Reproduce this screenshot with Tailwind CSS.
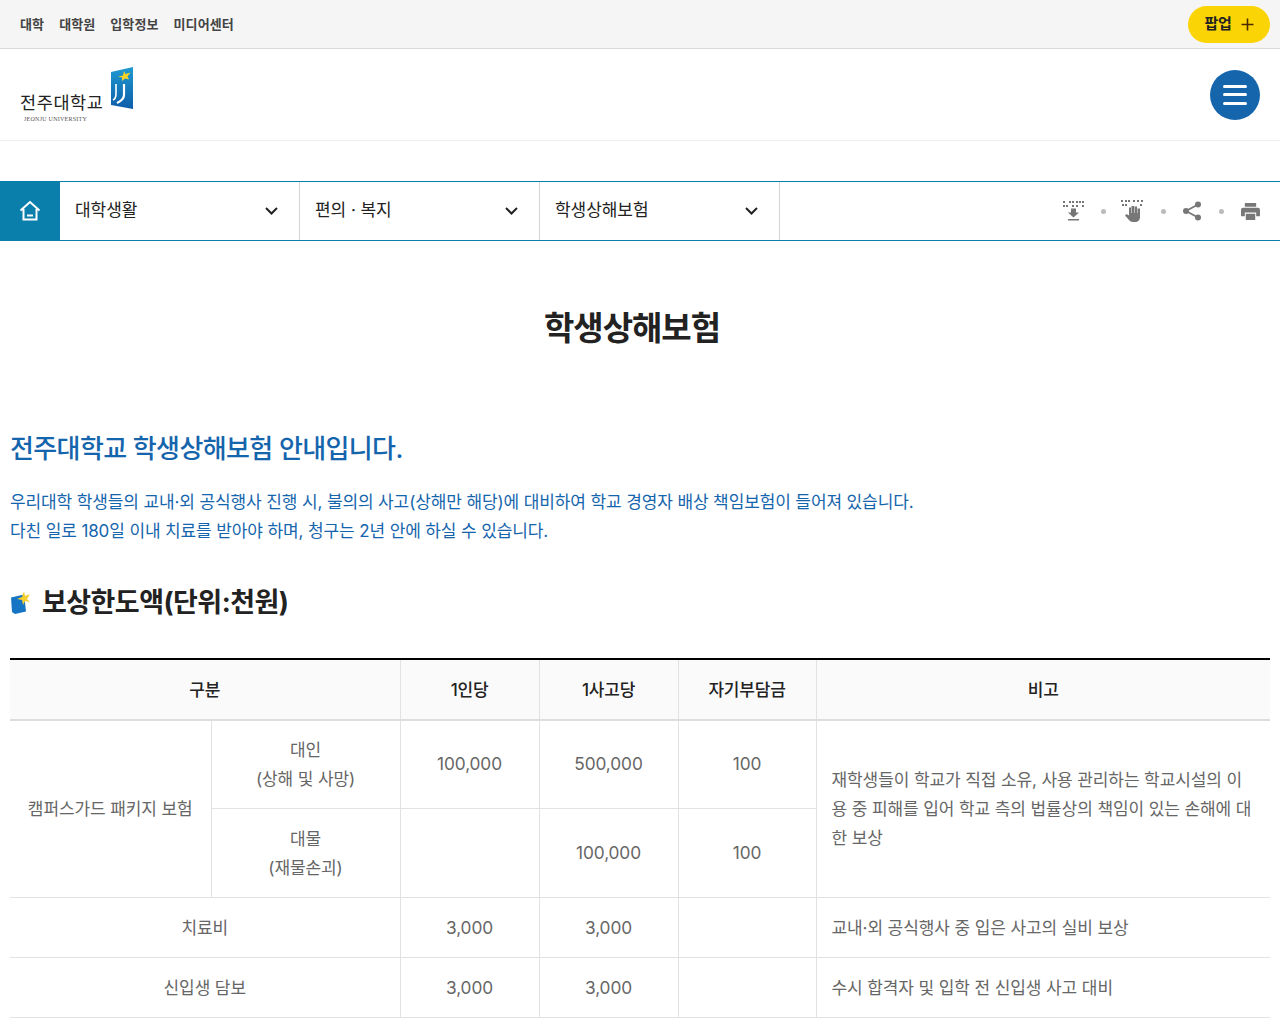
<!DOCTYPE html>
<html lang="ko">
<head>
  <meta charset="UTF-8">
  <title>학생상해보험</title>
  <script src="https://cdn.jsdelivr.net/npm/@tailwindcss/browser@4"></script>
</head>
<body class="bg-white font-['Inter','Noto_Sans_CJK_KR',sans-serif] text-[#222] overflow-hidden h-[1024px]">
  <!-- top bar -->
  <div class="h-[49px] bg-[#f5f5f5] border-b border-[#d9d9d9] flex items-center justify-between pl-5 pr-2.5">
    <ul class="flex gap-[15px] pt-0.5 text-[13px] font-bold text-[#444] tracking-[0.1px]">
      <li>대학</li>
      <li>대학원</li>
      <li>입학정보</li>
      <li>미디어센터</li>
    </ul>
    <button class="w-[82px] h-[37px] rounded-full bg-[#fbd406] flex items-center justify-center gap-[9px] text-[15px] font-bold text-[#222] tracking-[-0.3px]">
      팝업
      <svg width="13" height="13" viewBox="0 0 13 13"><path d="M6.500 0.500v12M0.500 6.500h12" stroke="#4a2a00" stroke-width="1.600"/></svg>
    </button>
  </div>

  <!-- logo row -->
  <div class="h-[92px] border-b border-[#eee] flex items-center justify-between pl-5 pr-5">
    <div class="relative w-[120px] h-[60px] mt-1">
      <div class="absolute left-0 top-[23px] text-[17.500px] leading-[26px] text-[#222] font-normal tracking-[0.6px] whitespace-nowrap">전주대학교</div>
      <div class="absolute left-1 top-[48px] text-[6px] leading-[8px] text-[#555] font-['Liberation_Serif'] tracking-[0.25px] whitespace-nowrap">JEONJU UNIVERSITY</div>
      <svg class="absolute left-[90px] top-0" width="24" height="44" viewBox="0 0 24 44">
        <defs><linearGradient id="lg" x1="0" y1="0" x2="0" y2="1"><stop offset="0" stop-color="#1f9ad1"/><stop offset="1" stop-color="#0d5da8"/></linearGradient></defs>
        <path d="M1 5L23 0V42L1 38Z" fill="url(#lg)"/>
        <path d="M14 4l1.500 3 5-1.500-3 4 1.500 3-4-1-3 2.500 0-3.500-4-1 5-1z" fill="#f5d327"/>
        <path d="M6 17v10c0 3-1 5-3 6" stroke="#fff" stroke-width="1.600" fill="none"/>
        <path d="M14 17v11c0 4-3 6-7 8" stroke="#fff" stroke-width="2.200" fill="none"/>
      </svg>
    </div>
    <button class="w-[50px] h-[50px] rounded-full bg-[#1565ad] flex flex-col items-center justify-center gap-[5.5px]">
      <span class="block w-6 h-[3px] rounded bg-white"></span>
      <span class="block w-6 h-[3px] rounded bg-white"></span>
      <span class="block w-6 h-[3px] rounded bg-white"></span>
    </button>
  </div>

  <!-- location bar -->
  <div class="mt-10 h-[60px] border-y border-[#0b7fab] flex items-stretch">
    <a class="w-[60px] -my-px bg-[#0b7fab] flex items-center justify-center">
      <svg width="22" height="22" viewBox="0 0 22 22" fill="none" stroke="#fff" stroke-width="2"><path d="M1.500 10.500L11 2l9.500 8.500M4.500 9v10.500h13V9"/><path d="M8 15.500h6"/></svg>
    </a>
    <div class="w-60 border-r border-[#d5d5d5] flex items-center justify-between pl-[15px] pr-[21px] text-[17px] tracking-[-0.05px]">
      <span>대학생활</span>
      <svg width="13" height="8" viewBox="0 0 13 8" fill="none" stroke="#222" stroke-width="2"><path d="M1 1l5.500 5.500L12 1"/></svg>
    </div>
    <div class="w-60 border-r border-[#d5d5d5] flex items-center justify-between pl-[15px] pr-[21px] text-[17px] tracking-[-0.05px]">
      <span>편의 · 복지</span>
      <svg width="13" height="8" viewBox="0 0 13 8" fill="none" stroke="#222" stroke-width="2"><path d="M1 1l5.500 5.500L12 1"/></svg>
    </div>
    <div class="w-60 border-r border-[#d5d5d5] flex items-center justify-between pl-[15px] pr-[21px] text-[17px] tracking-[-0.05px]">
      <span>학생상해보험</span>
      <svg width="13" height="8" viewBox="0 0 13 8" fill="none" stroke="#222" stroke-width="2"><path d="M1 1l5.500 5.500L12 1"/></svg>
    </div>
    <div class="flex-1 flex items-center justify-end pr-5 gap-[17.5px]">
      <svg class="-mr-0.5" width="23" height="20" viewBox="0 0 23 20" fill="#777">
        <path d="M1 0h2v2H1zM7 0h2v2H7zM10 0h2v2h-2zM14 0h2v2h-2zM17 0h2v2h-2zM20 0h2v2h-2zM1 4h2v2H1zM4 4h2v2H4zM10 4h2v2h-2zM14 4h2v2h-2zM20 4h2v2h-2z"/>
        <path d="M9 7.500h5v4h3l-5.500 5-5.500-5h3zM6 18h11v1.500H6z"/>
      </svg>
      <span class="-mr-0.5 w-[5px] h-[5px] rounded-full bg-[#bbb]"></span>
      <svg width="22" height="22" viewBox="0 0 22 22" fill="#777">
        <path d="M0 0h2v2H0zM4 0h2v2H4zM7 0h2v2H7zM12 0h2v2h-2zM16 0h2v2h-2zM20 0h2v2h-2zM1 4h2v2H1zM4 4h2v2H4zM19 4h2v2h-2z"/>
        <path d="M8 7.500h2V13h.500V6h2.500v7h.500V6.500h2.500V13h.500V8.500h2.500V17c0 3-2 5-5 5h-2c-2 0-3-1-4-2l-4-4.500 1.500-1.500L8 15.500z"/>
      </svg>
      <span class="w-[5px] h-[5px] rounded-full bg-[#bbb]"></span>
      <svg width="18" height="20" viewBox="0 0 18 20" fill="#777">
        <circle cx="15" cy="3.500" r="3"/><circle cx="3" cy="10" r="3"/><circle cx="15" cy="16.500" r="3"/>
        <path d="M3 10L15 3.500M3 10l12 6.500" stroke="#777" stroke-width="1.800"/>
      </svg>
      <span class="w-[5px] h-[5px] rounded-full bg-[#bbb]"></span>
      <svg width="19" height="17" viewBox="0 0 20 18" fill="#777">
        <path d="M4 0h12v4H4zM2 5h16a2 2 0 0 1 2 2v7h-4v-4H4v4H0V7a2 2 0 0 1 2-2zM5 11.500h10V18H5z"/>
      </svg>
    </div>
  </div>

  <!-- content -->
  <div class="px-2.5">
    <h1 class="mt-[63px] mr-4 text-center text-[33px] leading-[48px] font-bold text-[#222] tracking-[-1px]">학생상해보험</h1>

    <h2 class="mt-[78px] text-[26px] leading-[38px] font-medium text-[#1565ad] tracking-[-0.62px]">전주대학교 학생상해보험 안내입니다.</h2>
    <p class="mt-[20px] text-[17px] leading-[29px] text-[#1565ad] tracking-[-0.12px]">
      우리대학 학생들의 교내·외 공식행사 진행 시, 불의의 사고(상해만 해당)에 대비하여 학교 경영자 배상 책임보험이 들어져 있습니다.<br>
      다친 일로 180일 이내 치료를 받아야 하며, 청구는 2년 안에 하실 수 있습니다.
    </p>

    <h3 class="mt-[37px] flex items-center gap-[11px] text-[27px] leading-[40px] font-bold text-[#222] tracking-[-0.55px]">
      <svg width="21" height="24" viewBox="0 0 21 24">
        <path d="M1 6.500L14 3.500 16 20.500 5 23 2 21Z" fill="#1574c4"/>
        <path d="M14 0l1 5 5-2-3 5 3 3-5-1-2 4-1-5-5-1 5-2z" fill="#f6cf2e"/>
      </svg>
      보상한도액(단위:천원)
    </h3>

    <table class="mt-[35px] w-[1260px] table-fixed border-collapse border-t-2 border-black text-[17px] text-[#666] tracking-[-0.1px] text-center">
      <colgroup>
        <col class="w-[201px]"><col class="w-[189px]"><col class="w-[139px]"><col class="w-[139px]"><col class="w-[138px]"><col>
      </colgroup>
      <thead>
        <tr class="h-[61px] bg-[#fafafa] border-b-2 border-[#ddd] text-[#222] tracking-[-0.2px]">
          <th colspan="2" class="pt-0.5 font-medium border-r border-[#e2e2e2]">구분</th>
          <th class="pt-0.5 font-medium border-r border-[#e2e2e2]">1인당</th>
          <th class="pt-0.5 font-medium border-r border-[#e2e2e2]">1사고당</th>
          <th class="pt-0.5 font-medium border-r border-[#e2e2e2]">자기부담금</th>
          <th class="pt-0.5 font-medium">비고</th>
        </tr>
      </thead>
      <tbody>
        <tr class="h-[88px] border-b border-[#e2e2e2]">
          <td rowspan="2" class="pt-0.5 border-r border-[#e2e2e2]">캠퍼스가드 패키지 보험</td>
          <td class="pt-0.5 border-r border-[#e2e2e2] leading-[29px]">대인<br>(상해 및 사망)</td>
          <td class="border-r border-[#e2e2e2] text-[17.300px]">100,000</td>
          <td class="border-r border-[#e2e2e2] text-[17.300px]">500,000</td>
          <td class="border-r border-[#e2e2e2] text-[17.300px]">100</td>
          <td rowspan="2" class="pt-0.5 px-[15px] text-left leading-[29px] break-all">재학생들이 학교가 직접 소유, 사용 관리하는 학교시설의 이용 중 피해를 입어 학교 측의 법률상의 책임이 있는 손해에 대한 보상</td>
        </tr>
        <tr class="h-[89px] border-b border-[#e2e2e2]">
          <td class="pt-0.5 border-r border-[#e2e2e2] leading-[29px]">대물<br>(재물손괴)</td>
          <td class="border-r border-[#e2e2e2]"></td>
          <td class="border-r border-[#e2e2e2] text-[17.300px] pt-px">100,000</td>
          <td class="border-r border-[#e2e2e2] text-[17.300px] pt-px">100</td>
        </tr>
        <tr class="h-[60px] border-b border-[#e2e2e2]">
          <td colspan="2" class="pt-1 border-r border-[#e2e2e2]">치료비</td>
          <td class="border-r border-[#e2e2e2] text-[17.300px] pt-px">3,000</td>
          <td class="border-r border-[#e2e2e2] text-[17.300px] pt-px">3,000</td>
          <td class="border-r border-[#e2e2e2]"></td>
          <td class="pt-1 px-[15px] text-left">교내·외 공식행사 중 입은 사고의 실비 보상</td>
        </tr>
        <tr class="h-[60px] border-b border-[#e2e2e2]">
          <td colspan="2" class="pt-1 border-r border-[#e2e2e2]">신입생 담보</td>
          <td class="border-r border-[#e2e2e2] text-[17.300px] pt-px">3,000</td>
          <td class="border-r border-[#e2e2e2] text-[17.300px] pt-px">3,000</td>
          <td class="border-r border-[#e2e2e2]"></td>
          <td class="pt-1 px-[15px] text-left">수시 합격자 및 입학 전 신입생 사고 대비</td>
        </tr>
      </tbody>
    </table>
  </div>
</body>
</html>
